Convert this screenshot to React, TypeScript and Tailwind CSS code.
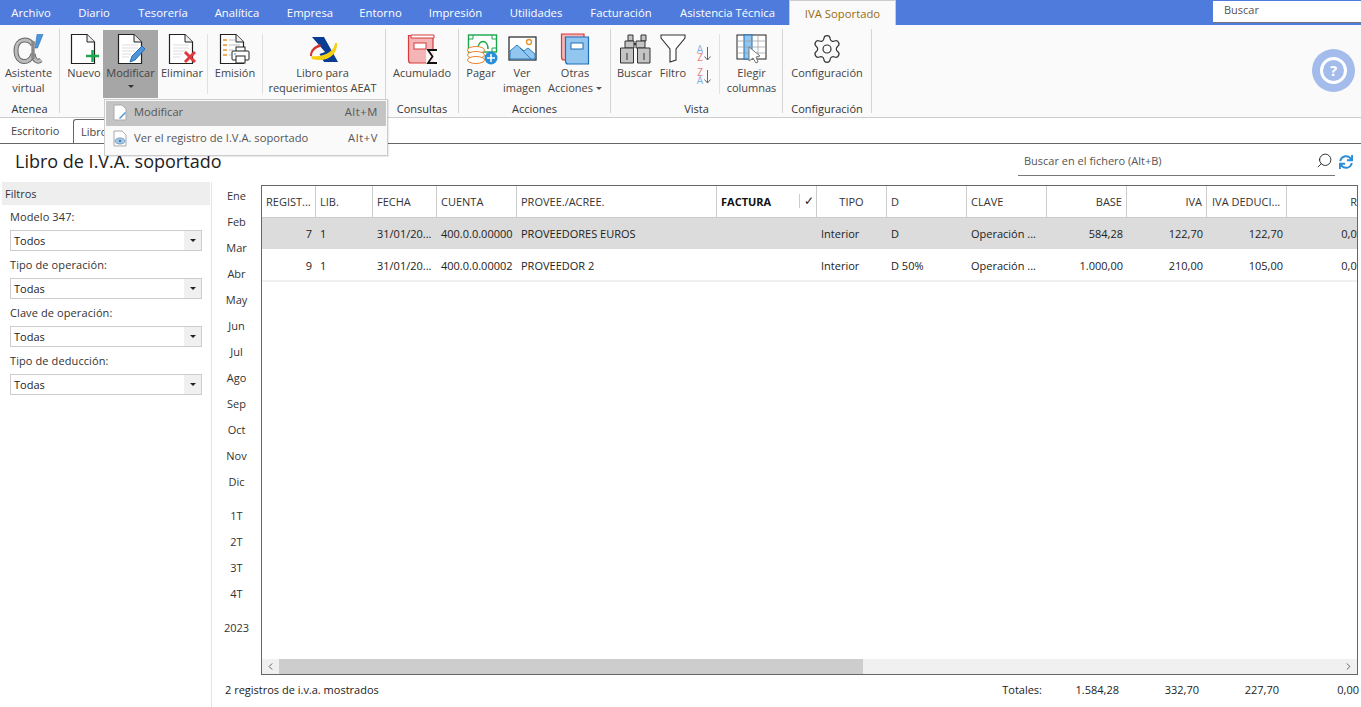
import React from "react";
import { Settings, Search, ChevronLeft, ChevronRight } from "lucide-react";
import { FaSync } from "react-icons/fa";

const font = { fontFamily: '"Open Sans", "Noto Sans", sans-serif' };

const tabs = [
  { label: "Archivo", w: "w-[62px]" },
  { label: "Diario", w: "w-[64px]" },
  { label: "Tesorería", w: "w-[74px]" },
  { label: "Analítica", w: "w-[74px]" },
  { label: "Empresa", w: "w-[72px]" },
  { label: "Entorno", w: "w-[69px]" },
  { label: "Impresión", w: "w-[81px]" },
  { label: "Utilidades", w: "w-[80px]" },
  { label: "Facturación", w: "w-[90px]" },
  { label: "Asistencia Técnica", w: "w-[123px]" },
];

const months = ["Ene", "Feb", "Mar", "Abr", "May", "Jun", "Jul", "Ago", "Sep", "Oct", "Nov", "Dic"];
const quarters = ["1T", "2T", "3T", "4T"];

const Doc = ({ lines = false }: { lines?: boolean }) => (
  <>
    <path d="M3.5 1.5H19L26.5 9V30.5H3.5Z" fill="#fff" stroke="#222" strokeWidth="1.2" />
    <path d="M19 1.5V9H26.5" fill="#eee" stroke="#222" strokeWidth="1" />
    {lines && <path d="M7 12H23M7 15H23M7 18H20M7 21H16M7 24H14" stroke="#ddd" strokeWidth="1" />}
  </>
);

const AlphaIcon = () => (
  <svg width="32" height="32" viewBox="0 0 32 32">
    <path d="M20 12C17 5 3 4 3 18C3 31 17 32 20 21C21 27 24 30 28 27" fill="none" stroke="#666" strokeWidth="5" />
    <path d="M20 12C17 5 3 4 3 18C3 31 17 32 20 21C21 27 24 30 28 27" fill="none" stroke="#bbb" strokeWidth="3" />
    <path d="M20 8C20 16 20 20 20 26" fill="none" stroke="#888" strokeWidth="3.4" />
    <path d="M24 1.5H30L24.5 15H22Z" fill="#4d94d8" stroke="#2a6fb8" strokeWidth="0.6" />
  </svg>
);

const NewIcon = () => (
  <svg width="32" height="32" viewBox="0 0 32 32">
    <Doc />
    <path d="M18 23H31M24.5 17V29" stroke="#1aa64a" strokeWidth="2.4" />
  </svg>
);

const EditIcon = () => (
  <svg width="32" height="32" viewBox="0 0 32 32">
    <Doc lines />
    <path d="M15 29L17 23L27 13L30 16L20 27Z" fill="#4d94d8" stroke="#2a6fb8" strokeWidth="1" />
  </svg>
);

const DeleteIcon = () => (
  <svg width="32" height="32" viewBox="0 0 32 32">
    <Doc lines />
    <path d="M19 19L29 29M29 19L19 29" stroke="#e0393e" strokeWidth="3" />
  </svg>
);

const PrintIcon = () => (
  <svg width="32" height="32" viewBox="0 0 32 32">
    <path d="M1.5 1.5H17L24.5 9V30.5H1.5Z" fill="#fff" stroke="#222" strokeWidth="1.2" />
    <path d="M17 1.5V9H24.5" fill="#eee" stroke="#222" strokeWidth="1" />
    <path d="M4 7H8M4 12H8M4 17H8M4 22H8" stroke="#e8912d" strokeWidth="1.3" />
    <path d="M10 7H16M10 12H21M10 17H14M10 22H12" stroke="#bbb" strokeWidth="1" />
    <rect x="17" y="14" width="9" height="5" fill="#fff" stroke="#222" />
    <rect x="13" y="18" width="17" height="9" rx="1" fill="#fff" stroke="#222" />
    <rect x="17" y="23" width="9" height="7" fill="#fff" stroke="#222" />
    <path d="M15 21H17" stroke="#2a8fd8" />
  </svg>
);

const AeatIcon = () => (
  <svg width="32" height="30" viewBox="0 0 32 30">
    <path d="M5 3H17L31 28H17L12.5 20L18 18Z" fill="#0b3c94" />
    <path d="M28 9C28 16 18 24 4 22L5 25C18 29 31 22 30 9Z" fill="#f7cf12" />
    <path d="M13 10C7 12 3 16 3 22L5 22C5 17 9 14 14 12.5Z" fill="#d9322e" />
  </svg>
);

const SumIcon = () => (
  <svg width="32" height="32" viewBox="0 0 32 32">
    <path d="M2.5 2.5H27V30H5Q2.5 30 2.5 27Z" fill="#f3b5b5" stroke="#d93a3a" strokeWidth="1.2" />
    <path d="M5 2H28V5H5Z" fill="#fff" stroke="#d93a3a" />
    <rect x="8" y="10" width="12" height="6" fill="#fff" stroke="#d93a3a" />
    <path d="M20 16H32V31H20Z" fill="#fff" opacity="0.85" />
    <path d="M31 17H22L26.5 23.5L22 30H31" fill="none" stroke="#111" strokeWidth="1.8" />
  </svg>
);

const PayIcon = () => (
  <svg width="34" height="32" viewBox="0 0 34 32">
    <rect x="4.5" y="2" width="28" height="17" fill="#fff" stroke="#1aa64a" strokeWidth="1.4" />
    <path d="M14 16C14 6 24 6 24 16" fill="none" stroke="#1aa64a" strokeWidth="1.5" />
    <path d="M4.5 6H9V2M28 2V6H32.5M28 19V15H32.5" fill="none" stroke="#1aa64a" />
    <ellipse cx="12" cy="17" rx="8.5" ry="3.5" fill="#fff" stroke="#e8832d" />
    <ellipse cx="12" cy="22" rx="8.5" ry="3.5" fill="#fff" stroke="#e8832d" />
    <ellipse cx="12" cy="27" rx="8.5" ry="3.5" fill="#fff" stroke="#e8832d" />
    <circle cx="27" cy="25" r="6.5" fill="#2a8fd8" />
    <path d="M23 25H31M27 21V29" stroke="#fff" strokeWidth="1.5" />
  </svg>
);

const ImageIcon = () => (
  <svg width="30" height="26" viewBox="0 0 30 26">
    <rect x="2" y="1" width="27" height="23" fill="#fff" stroke="#222" strokeWidth="1.2" />
    <path d="M3 22V15L10 9L17 15L21 12L28 18V23H3Z" fill="#93c6ee" stroke="#2a7fc4" />
    <path d="M13 12L24 23" stroke="#2a7fc4" />
    <circle cx="22" cy="6" r="2.5" fill="#fff" stroke="#e8912d" strokeWidth="1.3" />
  </svg>
);

const BooksIcon = () => (
  <svg width="32" height="32" viewBox="0 0 32 32">
    <path d="M2.5 1H25V27H5Q2.5 27 2.5 24Z" fill="#f3b5b5" stroke="#d93a3a" strokeWidth="1.2" />
    <path d="M6.5 4H29.5V31H9Q6.5 31 6.5 28Z" fill="#93c6ee" stroke="#1f6fb8" strokeWidth="1.2" />
    <rect x="12" y="10" width="12" height="6" fill="#fff" stroke="#1f6fb8" />
  </svg>
);

const BinocularsIcon = () => (
  <svg width="32" height="30" viewBox="0 0 32 30">
    <path d="M9 1H14V7H9ZM22 1H27V7H22Z" fill="#c4c4c4" stroke="#333" />
    <path d="M6 7H15V14H6ZM17 7H26V14H17Z" fill="#c4c4c4" stroke="#333" />
    <path d="M1.5 14H14.5V29H1.5ZM18.5 14H31V29H18.5Z" fill="#c4c4c4" stroke="#333" />
    <path d="M15 10H17" stroke="#333" strokeWidth="2" />
    <path d="M8 19V26M25 19V26" stroke="#333" />
  </svg>
);

const FunnelIcon = () => (
  <svg width="26" height="30" viewBox="0 0 26 30">
    <path d="M1 1H25V4L16 15V26L10 28V15L1 4Z" fill="#fff" stroke="#333" strokeWidth="1.1" />
  </svg>
);

const SortIcon = ({ top, bottom, topCls, bottomCls }: { top: string; bottom: string; topCls: string; bottomCls: string }) => (
  <div className="flex items-center gap-[1px]">
    <div className="flex flex-col items-center text-[10px] leading-[8px]">
      <span className={topCls}>{top}</span>
      <span className={bottomCls}>{bottom}</span>
    </div>
    <svg width="7" height="15" viewBox="0 0 7 15">
      <path d="M3.5 1V14M0.5 10.5L3.5 14L6.5 10.5" fill="none" stroke="#666" />
    </svg>
  </div>
);

const ColumnsIcon = () => (
  <svg width="32" height="30" viewBox="0 0 32 30">
    <rect x="1" y="1" width="29" height="24" fill="#fff" stroke="#222" />
    <rect x="8" y="1" width="8" height="24" fill="#93c6ee" stroke="#1f6fb8" />
    <path d="M1 7H30M1 13H30M1 19H30M22 1V25" stroke="#999" strokeWidth="0.7" />
    <path d="M13 13V27L17 24L20 29L22 28L20 23L24 22Z" fill="#fff" stroke="#777" />
  </svg>
);

const Caret = () => (
  <span className="inline-block ml-[3px] mb-[2px] w-0 h-0 border-x-[3px] border-x-transparent border-t-[3px] border-t-[#555]" />
);

const RibbonButton = ({
  w,
  lines,
  icon,
  active,
  caret,
}: {
  w: string;
  lines: string[];
  icon: React.ReactNode;
  active?: boolean;
  caret?: boolean;
}) => (
  <div className={`${w} h-[68px] mt-px shrink-0 flex flex-col items-center ${active ? "bg-[#a6a6a6]" : ""}`}>
    <div className="h-[35px] pt-[2px] w-full flex items-center justify-center">{icon}</div>
    {lines.map((line, i) => (
      <div key={line} className="text-[11px] leading-[15px] whitespace-nowrap text-[#444]">
        {line}
        {caret && i === lines.length - 1 && <Caret />}
      </div>
    ))}
    {active && <div className="mt-[5px] w-0 h-0 border-x-[3px] border-x-transparent border-t-[3px] border-t-[#333]" />}
  </div>
);

const RibbonGroup = ({
  w,
  label,
  children,
}: {
  w: string;
  label: string;
  children: React.ReactNode;
}) => (
  <div className={`${w} h-[84px] mt-[4px] shrink-0 flex flex-col border-r border-[#d4d4d4]`}>
    <div className="flex h-[69px] items-start">{children}</div>
    <div className="text-[11px] leading-[15px] mt-[3px] text-center text-[#333]">{label}</div>
  </div>
);

const Sep = () => <div className="w-px h-[60px] mt-[5px] mx-[1px] bg-[#e0e0e0] shrink-0" />;

const FilterSelect = ({ label, value }: { label: string; value: string }) => (
  <div className="mb-[6px]">
    <div className="text-[11px] leading-[15px] text-[#333] h-[21px] pl-[10px] pr-[9px] tracking-[0.1px]">{label}</div>
    <div className="ml-[10px] mr-[9px] h-[21px] border border-[#ccc] bg-white flex items-center text-[11px] text-[#222]">
      <span className="flex-1 pl-[3px] pt-px">{value}</span>
      <span className="w-[17px] h-full bg-[#f0f0f0] flex items-center justify-center">
        <span className="w-0 h-0 border-x-[3px] border-x-transparent border-t-[3px] border-t-[#222]" />
      </span>
    </div>
  </div>
);

const columns = [
  { label: "REGIST...", cls: "pl-[4px]" },
  { label: "LIB.", cls: "pl-[4px]" },
  { label: "FECHA", cls: "pl-[4px]" },
  { label: "CUENTA", cls: "pl-[4px]" },
  { label: "PROVEE./ACREE.", cls: "pl-[4px]" },
  { label: "FACTURA", cls: "pl-[4px] font-bold text-[#111]" },
  { label: "TIPO", cls: "justify-center" },
  { label: "D", cls: "pl-[4px]" },
  { label: "CLAVE", cls: "pl-[4px]" },
  { label: "BASE", cls: "justify-end pr-[4px]" },
  { label: "IVA", cls: "justify-end pr-[4px]" },
  { label: "IVA DEDUCI...", cls: "pl-[5px]" },
  { label: "R", cls: "justify-end pr-[9px]" },
];

const rows = [
  ["7", "1", "31/01/20...", "400.0.0.00000", "PROVEEDORES EUROS", "", "Interior", "D", "Operación ...", "584,28", "122,70", "122,70", "0,00"],
  ["9", "1", "31/01/20...", "400.0.0.00002", "PROVEEDOR 2", "", "Interior", "D 50%", "Operación ...", "1.000,00", "210,00", "105,00", "0,00"],
];

const alignRight = [0, 9, 10, 11, 12];
const gridCols = "grid grid-cols-[54px_57px_64px_80px_200px_100px_70px_80px_80px_80px_80px_80px_80px] w-[1125px]";

export default function App() {
  return (
    <div className="relative w-[1361px] h-[707px] overflow-hidden bg-white flex flex-col" style={font}>
      {/* Menu bar */}
      <div className="h-[25px] bg-[#4f7cdc] flex shrink-0">
        {tabs.map((t) => (
          <div key={t.label} className={`${t.w} text-[11.3px] leading-[25px] text-center text-white whitespace-nowrap`}>
            {t.label}
          </div>
        ))}
        <div className="w-[107px] h-[25px] bg-[#fafafa] border-x border-t border-[#ccc] text-[11.3px] leading-[25px] text-center text-[#9a6a10]">
          IVA Soportado
        </div>
        <div className="ml-auto w-[148px] h-[22px] mt-px bg-white border-b border-[#777] text-[11px] leading-[18px] pl-[11px] text-[#555]">
          Buscar
        </div>
      </div>

      {/* Ribbon */}
      <div className="h-[93px] bg-[#fafafa] border-b border-[#ccc] flex shrink-0">
        <RibbonGroup w="w-[60px]" label="Atenea">
          <RibbonButton w="w-[57px]" lines={["Asistente", "virtual"]} icon={<AlphaIcon />} />
        </RibbonGroup>
        <RibbonGroup w="w-[326px]" label="">
          <div className="w-[5px]" />
          <RibbonButton w="w-[38px]" lines={["Nuevo"]} icon={<NewIcon />} />
          <RibbonButton w="w-[55px]" lines={["Modificar"]} icon={<EditIcon />} active />
          <RibbonButton w="w-[48px]" lines={["Eliminar"]} icon={<DeleteIcon />} />
          <Sep />
          <RibbonButton w="w-[52px]" lines={["Emisión"]} icon={<PrintIcon />} />
          <Sep />
          <RibbonButton w="w-[117px]" lines={["Libro para", "requerimientos AEAT"]} icon={<AeatIcon />} />
        </RibbonGroup>
        <RibbonGroup w="w-[73px]" label="Consultas">
          <RibbonButton w="w-[72px]" lines={["Acumulado"]} icon={<SumIcon />} />
        </RibbonGroup>
        <RibbonGroup w="w-[152px]" label="Acciones">
          <RibbonButton w="w-[44px]" lines={["Pagar"]} icon={<PayIcon />} />
          <RibbonButton w="w-[38px]" lines={["Ver", "imagen"]} icon={<ImageIcon />} />
          <div className="w-[4px]" />
          <RibbonButton w="w-[60px]" lines={["Otras", "Acciones"]} icon={<BooksIcon />} caret />
        </RibbonGroup>
        <RibbonGroup w="w-[172px]" label="Vista">
          <div className="w-[2px]" />
          <RibbonButton w="w-[43px]" lines={["Buscar"]} icon={<BinocularsIcon />} />
          <RibbonButton w="w-[34px]" lines={["Filtro"]} icon={<FunnelIcon />} />
          <div className="w-[28px] flex flex-col items-center gap-[7px] pt-[16px]">
            <SortIcon top="A" bottom="Z" topCls="text-[#7fb2e6]" bottomCls="text-[#ef7c7c]" />
            <SortIcon top="Z" bottom="A" topCls="text-[#ef7c7c]" bottomCls="text-[#7fb2e6]" />
          </div>
          <Sep />
          <RibbonButton w="w-[61px]" lines={["Elegir", "columnas"]} icon={<ColumnsIcon />} />
        </RibbonGroup>
        <RibbonGroup w="w-[89px]" label="Configuración">
          <RibbonButton
            w="w-[88px]"
            lines={["Configuración"]}
            icon={<Settings size={32} strokeWidth={0.9} color="#333" />}
          />
        </RibbonGroup>
        <div className="ml-auto mr-[6px] mt-[24px] w-[43px] h-[43px] rounded-full bg-[#a3bcec] flex items-center justify-center">
          <div className="w-[27px] h-[27px] rounded-full border-[3px] border-white text-white text-[15px] leading-[21px] font-bold text-center">
            ?
          </div>
        </div>
      </div>

      {/* Document tabs */}
      <div className="h-[26px] border-b border-[#666] flex items-end pl-[11px] shrink-0">
        <div className="w-[62px] text-[11px] leading-[24px] text-[#444]">Escritorio</div>
        <div className="w-[160px] h-[24px] border-l border-t border-[#666] rounded-tl-[3px] pl-[7px] text-[11px] leading-[24px] text-[#444] whitespace-nowrap overflow-hidden">
          Libro de I.V.A. soportado
        </div>
      </div>

      {/* Title and search */}
      <div className="h-[38px] flex items-start shrink-0">
        <div className="pl-[15px] pt-[5px] text-[18px] leading-[25px] text-[#222] w-[1018px]">Libro de I.V.A. soportado</div>
        <div className="w-[317px] h-[32px] border-b border-[#777] flex items-center pl-[6px] text-[11px] text-[#555]">
          <span className="flex-1 pt-[3px]">Buscar en el fichero (Alt+B)</span>
          <Search size={17} strokeWidth={1.2} color="#111" className="-scale-x-100 mr-[2px] mt-[2px]" />
        </div>
        <FaSync size={14} color="#2a8fd8" className="ml-[4px] mt-[11px]" />
      </div>

      {/* Body */}
      <div className="flex-1 flex min-h-0">
        <div className="w-[212px] shrink-0 border-r border-[#e4e4e4] pl-[2px]">
          <div className="h-[23px] bg-[#eeeeee] w-[208px] pl-[3px] text-[11px] leading-[23px] text-[#333] mb-[4px]">Filtros</div>
          <div className="-ml-[2px]">
            <FilterSelect label="Modelo 347:" value="Todos" />
            <FilterSelect label="Tipo de operación:" value="Todas" />
            <FilterSelect label="Clave de operación:" value="Todas" />
            <FilterSelect label="Tipo de deducción:" value="Todas" />
          </div>
        </div>

        <div className="flex-1 min-w-0 flex flex-col">
          <div className="flex-1 flex min-h-0">
            {/* Period selector */}
            <div className="w-[49px] shrink-0 text-center text-[11px] text-[#333] pt-[1px]">
              {months.map((m) => (
                <div key={m} className="h-[26px] leading-[26px]">{m}</div>
              ))}
              <div className="h-[8px]" />
              {quarters.map((q) => (
                <div key={q} className="h-[26px] leading-[26px]">{q}</div>
              ))}
              <div className="h-[8px]" />
              <div className="h-[26px] leading-[26px]">2023</div>
            </div>

            {/* Grid */}
            <div className="w-[1097px] h-[490px] mt-[3px] border border-[#666] bg-white flex flex-col overflow-hidden">
              <div className="flex-1 min-h-0 overflow-hidden text-[11px]">
                <div className={`${gridCols} h-[32px] border-b border-[#ccc] text-[#333]`}>
                  {columns.map((c) => (
                    <div key={c.label} className={`relative flex items-center pt-px whitespace-nowrap border-r border-[#ccc] ${c.cls}`}>
                      {c.label}
                      {c.label === "FACTURA" && (
                        <span className="absolute right-[2px] top-[8px] pl-[4px] border-l border-[#ccc] text-[12px] leading-[14px] font-normal text-[#222]">✓</span>
                      )}
                    </div>
                  ))}
                </div>
                {rows.map((row, r) => (
                  <div key={row[0]} className={`${gridCols} h-[32px] ${r === 0 ? "bg-[#dcdcdc] border-b border-white" : "border-b-2 border-[#f0f0f0]"} text-[#222]`}>
                    {row.map((cell, i) => (
                      <div
                        key={i}
                        className={`flex items-center whitespace-nowrap px-[4px] ${r === 0 ? "pt-px" : "pt-[2px]"} ${alignRight.includes(i) ? "justify-end" : ""}`}
                      >
                        {cell}
                      </div>
                    ))}
                  </div>
                ))}
              </div>
              <div className="h-[15px] bg-[#f0f0f0] flex items-center text-[#555] shrink-0">
                <span className="w-[17px] flex justify-center">
                  <ChevronLeft size={11} strokeWidth={2} />
                </span>
                <div className="w-[584px] h-full bg-[#cdcdcd]" />
                <span className="ml-auto w-[17px] flex justify-center">
                  <ChevronRight size={11} strokeWidth={2} />
                </span>
              </div>
            </div>
          </div>

          {/* Footer */}
          <div className="h-[33px] flex items-center text-[11px] text-[#222] shrink-0 pr-[2px] pb-[1px]">
            <span className="pl-[13px]">2 registros de i.v.a. mostrados</span>
            <span className="ml-auto">Totales:</span>
            <span className="w-[77px] text-right">1.584,28</span>
            <span className="w-[80px] text-right">332,70</span>
            <span className="w-[80px] text-right">227,70</span>
            <span className="w-[80px] text-right">0,00</span>
          </div>
        </div>
      </div>

      {/* Modificar dropdown */}
      <div className="absolute left-[104px] top-[99px] w-[284px] h-[57px] bg-[#fafafa] border border-[#ccc] p-px text-[11.2px] text-[#555] shadow-[1px_1px_1px_rgba(0,0,0,0.08)]">
        <div className="h-[25px] bg-[#c4c4c4] flex items-center pl-[7px] pr-[8px] pb-[2px]">
          <svg width="14" height="17" viewBox="0 0 14 17">
            <path d="M1 1H9L13 5V16H1Z" fill="#fff" stroke="#aaa" />
            <path d="M6 14L12 8L13 9L7 15Z" fill="#4d94d8" />
          </svg>
          <span className="ml-[7px] flex-1">Modificar</span>
          <span className="tracking-[0.6px]">Alt+M</span>
        </div>
        <div className="h-[26px] flex items-center pl-[7px] pr-[8px] pb-[2px]">
          <svg width="14" height="17" viewBox="0 0 14 17">
            <path d="M1 1H9L13 5V16H1Z" fill="#fff" stroke="#aaa" />
            <ellipse cx="7" cy="11" rx="5" ry="3" fill="#a8cbe8" stroke="#6f9fc8" />
            <circle cx="7" cy="11" r="1.3" fill="#4d7fa8" />
          </svg>
          <span className="ml-[7px] flex-1">Ver el registro de I.V.A. soportado</span>
          <span className="tracking-[0.6px]">Alt+V</span>
        </div>
      </div>
    </div>
  );
}
